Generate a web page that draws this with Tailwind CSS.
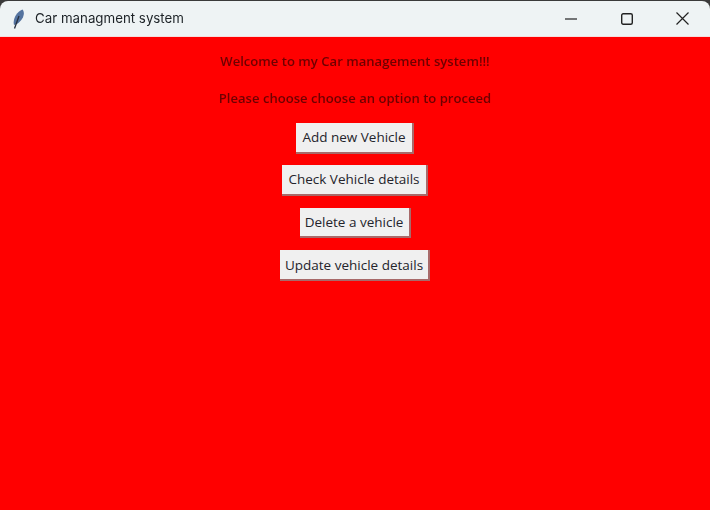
<!DOCTYPE html>
<html>
<head>
    <meta charset="UTF-8">
    <script src="https://cdn.jsdelivr.net/npm/@tailwindcss/browser@4"></script>
</head>
<body class="bg-[#3a3a3a] w-[710px] h-[510px] overflow-hidden font-['Open_Sans','Noto_Sans',sans-serif]">
    <div class="h-[36px] mt-px bg-[#eef3f4] rounded-t-lg flex items-center border-b border-[#f6dcdc]">
        <svg class="ml-[12px] w-[14px] h-[20px] blur-[0.3px]" viewBox="0 0 14 20">
            <path d="M2 16C0.500 11 4 3 10.500 0.500C13 3 12.500 10 5 15Z" fill="#54739f"/>
            <path d="M2.500 19.500L7 7" stroke="#26303f" stroke-width="1.300" fill="none"/>
        </svg>
        <span class="ml-[9px] text-[13.3px] text-[#1c2226] font-['Inter',sans-serif] blur-[0.3px]">Car managment system</span>
        <div class="ml-auto flex items-center">
            <svg class="w-[12px] h-[12px] mr-[43px]" viewBox="0 0 12 12"><path d="M0 6H12" stroke="#222" stroke-width="1.200"/></svg>
            <svg class="w-[12px] h-[12px] mr-[44px] translate-x-px" viewBox="0 0 12 12"><rect x="0.700" y="0.700" width="10.600" height="10.600" rx="1.500" fill="none" stroke="#222" stroke-width="1.400"/></svg>
            <svg class="w-[13px] h-[13px] mr-[21px]" viewBox="0 0 13 13"><path d="M0.500 0.500L12.500 12.500M12.500 0.500L0.500 12.500" stroke="#222" stroke-width="1.200"/></svg>
        </div>
    </div>
    <div class="h-[473px] bg-[#ff0000] flex flex-col items-center text-[13.1px] pt-[14px]">
        <p class="h-[20px] leading-[20px] text-[#6e0000] font-semibold whitespace-nowrap blur-[0.25px]">Welcome to my Car management system!!!</p>
        <p class="h-[20px] leading-[20px] mt-[17px] text-[#6e0000] font-semibold whitespace-nowrap blur-[0.25px]">Please choose choose an option to proceed</p>
        <button class="mt-[15px] h-[31px] w-[118px] bg-[#f0f0f0] text-[13.5px] text-[#24242b] font-medium border-r-2 border-b-2 border-[#a86a6a] whitespace-nowrap">Add new Vehicle</button>
        <button class="mt-[11px] h-[31px] w-[146px] bg-[#f0f0f0] text-[13.5px] text-[#24242b] font-medium border-r-2 border-b-2 border-[#a86a6a] whitespace-nowrap">Check Vehicle details</button>
        <button class="mt-[12px] h-[30px] w-[111px] pt-px bg-[#f0f0f0] text-[13.5px] text-[#24242b] font-medium border-r-2 border-b-2 border-[#a86a6a] whitespace-nowrap">Delete a vehicle</button>
        <button class="mt-[12px] h-[31px] w-[150px] pt-px bg-[#f0f0f0] text-[13.5px] text-[#24242b] font-medium border-r-2 border-b-2 border-[#a86a6a] whitespace-nowrap">Update vehicle details</button>
    </div>
</body>
</html>
